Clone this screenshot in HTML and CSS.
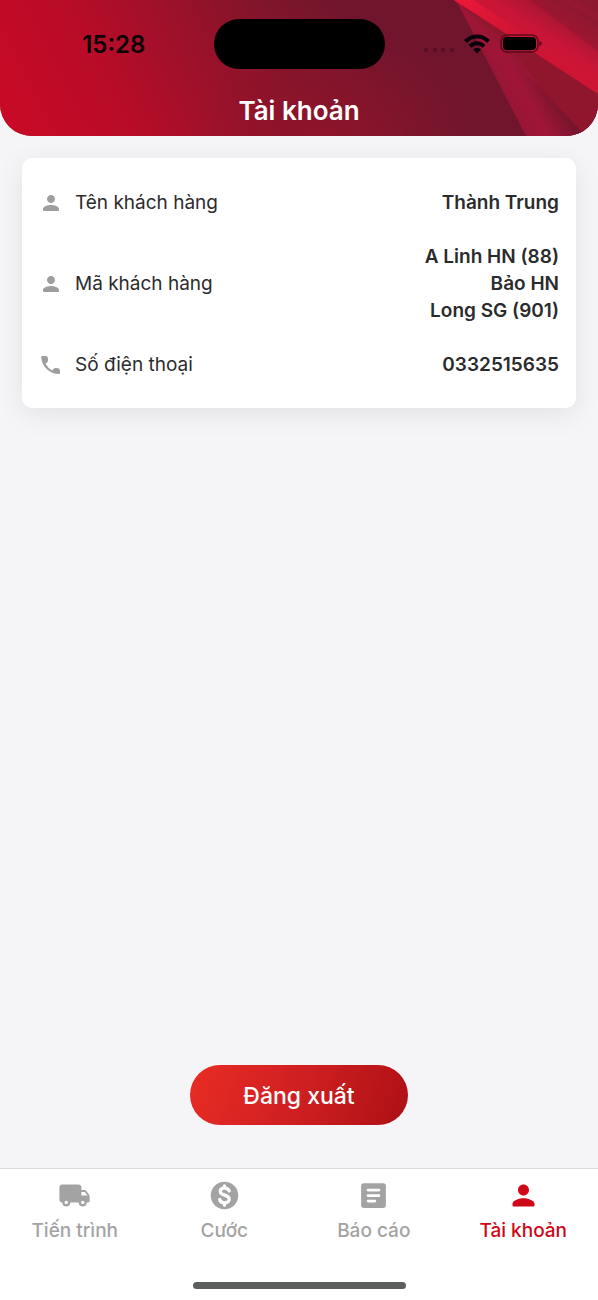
FILE: index.html
```html
<!DOCTYPE html>
<html lang="vi">
<head>
<meta charset="utf-8">
<meta name="viewport" content="width=device-width, initial-scale=1">
<title>Tài khoản</title>
<link rel="stylesheet" href="styles.css">
</head>
<body>
<svg class="defs" width="0" height="0" aria-hidden="true">
  <symbol id="person" viewBox="0 0 24 24"><path d="M12 12c2.210 0 4-1.790 4-4s-1.790-4-4-4-4 1.790-4 4 1.790 4 4 4zm0 2c-2.670 0-8 1.340-8 4v1c0 .55.45 1 1 1h14c.55 0 1-.45 1-1v-1c0-2.660-5.330-4-8-4z"/></symbol>
</svg>
<div class="app">
  <header class="header">
    <svg class="header-art" viewBox="0 0 598 136" preserveAspectRatio="none" aria-hidden="true">
      <defs>
        <linearGradient id="base" gradientUnits="userSpaceOnUse" x1="20" y1="136" x2="330" y2="-20">
          <stop offset="0" stop-color="#c80a26"/><stop offset=".3" stop-color="#b80c28"/><stop offset=".55" stop-color="#9c1129"/><stop offset=".8" stop-color="#80152b"/><stop offset="1" stop-color="#70152c"/>
        </linearGradient>
        <radialGradient id="lower" gradientUnits="userSpaceOnUse" cx="330" cy="160" r="150">
          <stop offset="0" stop-color="#8f142b"/><stop offset="1" stop-color="#8f142b" stop-opacity="0"/>
        </radialGradient>
        <linearGradient id="bright" gradientUnits="userSpaceOnUse" x1="520" y1="43" x2="558" y2="-16">
          <stop offset="0" stop-color="#cf1434"/><stop offset=".3" stop-color="#c91537"/><stop offset=".6" stop-color="#a91632"/><stop offset="1" stop-color="#8c172f"/>
        </linearGradient>
        <linearGradient id="tip" gradientUnits="userSpaceOnUse" x1="454" y1="0" x2="530" y2="40">
          <stop offset="0" stop-color="#f01838"/><stop offset="1" stop-color="#e01535" stop-opacity="0"/>
        </linearGradient>
        <linearGradient id="ray" gradientUnits="userSpaceOnUse" x1="503" y1="92" x2="549" y2="66">
          <stop offset="0" stop-color="#981536"/><stop offset=".35" stop-color="#a01538"/><stop offset=".85" stop-color="#76152d"/><stop offset="1" stop-color="#7a162e"/>
        </linearGradient>
      </defs>
      <path fill="url(#base)" d="M0 0h598v136H0z"/>
      <path fill="url(#lower)" d="M180 0h300v136H180z"/>
      <path fill="#90162e" d="M454 0l144 90v46h-17z"/>
      <path fill="url(#ray)" d="M456 0l70 136h60l-80-84z"/>
      <path fill="#a01638" opacity=".45" d="M456 0l28 54 54 29-32-42z"/>
      <path fill="url(#bright)" d="M454 0h144v94z"/>
      <path fill="url(#tip)" d="M454 0h20l66 46v8z"/>
      <path fill="#7c162d" opacity=".3" d="M530 0l68 52V20L560 0z"/>
    </svg>
    <div class="status">
      <time class="clock">15:28</time>
      <div class="island"></div>
      <div class="signals">
        <svg class="cellular" width="30" height="8" viewBox="0 0 30 8" fill="#3c0716"><rect y="2" width="4" height="4" rx="1"/><rect x="9" y="2" width="4" height="4" rx="1"/><rect x="17" y="2" width="4" height="4" rx="1"/><rect x="26" y="2" width="4" height="4" rx="1"/></svg>
        <svg width="26" height="20" viewBox="0 0 26 20" fill="none" stroke="#08020a" stroke-width="4"><path d="M1.500 7.500C8 .8 18 .8 24.500 7.500M6 12.300c4-4 10-4 14 0"/><path fill="#08020a" stroke="none" d="M13 19.500l-4-4c2.300-2.100 5.700-2.100 8 0z"/></svg>
        <svg width="42" height="20" viewBox="0 0 42 20"><rect x="1" y="1" width="37" height="17" rx="6" fill="none" stroke="#5d0a1c" stroke-width="1.500"/><rect x="3" y="3" width="33" height="13" rx="4"/><path d="M39.500 7c3 .8 3 4.200 0 5z" fill="#4d0718"/></svg>
      </div>
    </div>
    <h1 class="title">Tài khoản</h1>
  </header>

  <main class="main">
    <dl class="card">
      <div class="row">
        <dt class="label"><svg class="row-icon"><use href="#person"/></svg>Tên khách hàng</dt>
        <dd class="value">Thành Trung</dd>
      </div>
      <div class="row">
        <dt class="label"><svg class="row-icon"><use href="#person"/></svg>Mã khách hàng</dt>
        <dd class="value">A Linh HN (88)<br>Bảo HN<br>Long SG (901)</dd>
      </div>
      <div class="row">
        <dt class="label"><svg class="row-icon" viewBox="0 0 24 24"><path d="M19.200 15.300l-2.500-.3a2 2 0 0 0-1.700.6l-1.800 1.800a15.100 15.100 0 0 1-6.600-6.600L8.500 9c.4-.4.6-1 .5-1.700l-.2-2.500A2 2 0 0 0 6.800 3H3.500c-.8 0-1.300.5-1.300 1.200C2.700 13 9.900 20.500 19 21.100c.8 0 1.900-.4 1.900-1.200v-2.600a2 2 0 0 0-1.700-2z"/></svg>Số điện thoại</dt>
        <dd class="value">0332515635</dd>
      </div>
    </dl>
    <button class="logout" type="button">Đăng xuất</button>
  </main>

  <footer class="footer">
    <nav class="tabs">
      <a class="tab" href="#shipments">
        <svg class="tab-icon" viewBox="0 0 24 24"><path d="M19.500 8H17V6c0-1.100-.9-2-2-2H3c-1.100 0-2 .9-2 2v9c0 1.100.9 2 2 2 0 1.660 1.340 3 3 3s3-1.340 3-3h6c0 1.660 1.340 3 3 3s3-1.340 3-3h1c.55 0 1-.45 1-1v-3.330c0-.43-.14-.85-.4-1.200L20.300 8.400c-.19-.25-.49-.4-.8-.4zM6 18.250a1.250 1.250 0 1 1 0-2.500 1.250 1.250 0 0 1 0 2.500zm13.500-8.750l1.960 2.500H17V9.500h2.500zM18 18.250a1.250 1.250 0 1 1 0-2.500 1.250 1.250 0 0 1 0 2.500z"/></svg>
        Tiến trình
      </a>
      <a class="tab" href="#fees">
        <svg class="tab-icon" viewBox="0 0 24 24"><circle cx="12" cy="12" r="10"/><path d="M15.400 8.700C14.900 7.400 13.700 6.700 12.100 6.700c-1.900 0-3.200.9-3.200 2.400 0 3.300 6.500 2 6.500 5.500 0 1.700-1.400 2.700-3.300 2.700-1.800 0-3.200-.9-3.600-2.400M12 5.100v1.600M12 17.300v1.700" fill="none" stroke="#fff" stroke-width="2.400" stroke-linecap="round"/></svg>
        Cước
      </a>
      <a class="tab" href="#reports">
        <svg class="tab-icon" viewBox="0 0 24 24"><rect x="3" y="3" width="18" height="18" rx="2"/><path d="M8 8h8M8 12h8M8 16h5" fill="none" stroke="#fff" stroke-width="2" stroke-linecap="round"/></svg>
        Báo cáo
      </a>
      <a class="tab tab-active" href="#account" aria-current="page">
        <svg class="tab-icon"><use href="#person"/></svg>
        Tài khoản
      </a>
    </nav>
    <div class="home-indicator"></div>
  </footer>
</div>
</body>
</html>
```
FILE: styles.css
```css
* {
  box-sizing: border-box;
}

body {
  margin: 0;
  background: #f5f5f8;
  font-family: Inter, "Noto Sans", sans-serif;
  color: #2b2b2d;
}

.defs {
  position: absolute;
}

.app {
  display: flex;
  flex-direction: column;
  min-height: 100vh;
}

.header {
  position: relative;
  overflow: hidden;
  padding: 19px 0 9px;
  border-radius: 0 0 32px 32px;
  background: #8b142b;
}

.header-art {
  position: absolute;
  inset: 0;
  width: 100%;
  height: 100%;
}

.status {
  position: relative;
  display: grid;
  grid-template-columns: 1fr 171px 1fr;
  align-items: center;
}

.clock {
  padding: 2px 0 0 14px;
  text-align: center;
  font-size: 24px;
  line-height: 30px;
  font-weight: 600;
  color: #0b0205;
}

.island {
  height: 50px;
  border-radius: 25px;
  background: #000;
}

.signals {
  display: flex;
  align-items: center;
  justify-content: flex-end;
  gap: 10px;
  padding-right: 56px;
}

.cellular {
  margin-top: 12px;
  opacity: 0.4;
}

.title {
  position: relative;
  margin: 26px 0 0;
  text-align: center;
  font-size: 26px;
  line-height: 32px;
  font-weight: 600;
  color: #fff;
}

.main {
  flex: 1;
  display: flex;
  flex-direction: column;
  align-items: center;
  justify-content: space-between;
  gap: 40px;
  padding: 22px 22px 43px;
}

.card {
  align-self: stretch;
  display: flex;
  flex-direction: column;
  gap: 27px;
  margin: 0;
  padding: 31px 17px 30px;
  border-radius: 10px;
  background: #fff;
  box-shadow: 0 6px 28px rgba(0, 0, 0, 0.08);
}

.row {
  display: flex;
  align-items: center;
  justify-content: space-between;
  gap: 16px;
  font-size: 19px;
  line-height: 27px;
}

.label {
  display: flex;
  align-items: center;
  gap: 12px;
}

.row-icon {
  width: 24px;
  height: 24px;
  fill: #9e9e9e;
}

.value {
  margin: 0;
  text-align: right;
  font-weight: 600;
}

.logout {
  padding: 16px 53px 14px;
  border: 0;
  border-radius: 30px;
  background: linear-gradient(110deg, #e92c25, #cf1f21 50%, #ad1015);
  font: 500 23px/30px Inter, "Noto Sans", sans-serif;
  color: #fff;
}

.footer {
  border-top: 1px solid #dcdcdf;
  background: #fff;
}

.tabs {
  display: grid;
  grid-template-columns: repeat(4, 1fr);
}

.tab {
  display: flex;
  flex-direction: column;
  align-items: center;
  gap: 6px;
  padding-top: 10px;
  font-size: 19px;
  line-height: 26px;
  font-weight: 500;
  color: #a3a3a3;
  text-decoration: none;
}

.tab-active {
  color: #d00716;
}

.tab-icon {
  width: 33px;
  height: 33px;
  fill: currentColor;
}

.home-indicator {
  width: 213px;
  height: 7px;
  margin: 38px auto 11px;
  border-radius: 4px;
  background: #5c5d5d;
}
```
